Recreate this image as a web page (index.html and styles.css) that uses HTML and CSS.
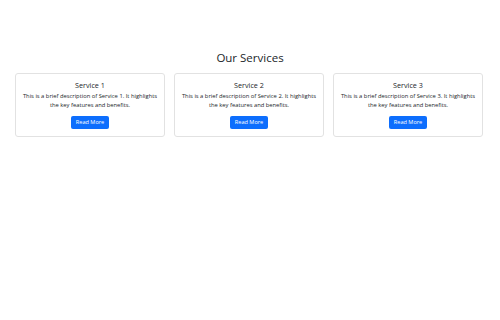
FILE: index.html
```html
<!DOCTYPE html>
<html>

<head>
    <meta name="viewport" content="width=device-width, initial-scale=1">
    <title>Our Services</title>
    <link rel="stylesheet" href="styles.css">
</head>

<body>
    <div class="services">
        <h2 class="services-title">Our Services</h2>

        <div class="card-row">
            <div class="card">
                <h5 class="card-title">Service 1</h5>
                <p class="card-text">This is a brief description of Service 1. It highlights the key features and benefits.</p>
                <a href="#" class="btn">Read More</a>
            </div>

            <div class="card">
                <h5 class="card-title">Service 2</h5>
                <p class="card-text">This is a brief description of Service 2. It highlights the key features and benefits.</p>
                <a href="#" class="btn">Read More</a>
            </div>

            <div class="card">
                <h5 class="card-title">Service 3</h5>
                <p class="card-text">This is a brief description of Service 3. It highlights the key features and benefits.</p>
                <a href="#" class="btn">Read More</a>
            </div>
        </div>
    </div>
</body>

</html>
```

FILE: styles.css
```css
body {
    font-family: "Open Sans", Arial, sans-serif;
    margin: 0;
    padding: 0;
    background-color: #fff;
    color: #212529;
}

.services {
    padding: 49px 15px 0 15px;
}

.services-title {
    text-align: center;
    font-size: 11.5px;
    font-weight: 400;
    line-height: 18px;
    margin: 0 0 6px 0;
}

.card-row {
    display: grid;
    grid-template-columns: repeat(3, 150px);
    gap: 9px;
}

.card {
    display: flex;
    flex-direction: column;
    align-items: center;
    border: 1px solid #e2e2e2;
    border-radius: 3px;
    padding: 6px 6px 7px 6px;
    text-align: center;
}

.card-title {
    font-size: 7.2px;
    font-weight: 400;
    line-height: 10px;
    margin: 0 0 2px 0;
}

.card-text {
    font-size: 5.8px;
    line-height: 9px;
    margin: 0 0 6px 0;
}

.btn {
    display: block;
    background-color: #0d6efd;
    color: #fff;
    font-size: 5.6px;
    line-height: 12.5px;
    height: 12.5px;
    padding: 0 5px;
    border-radius: 2px;
    text-decoration: none;
}
```
